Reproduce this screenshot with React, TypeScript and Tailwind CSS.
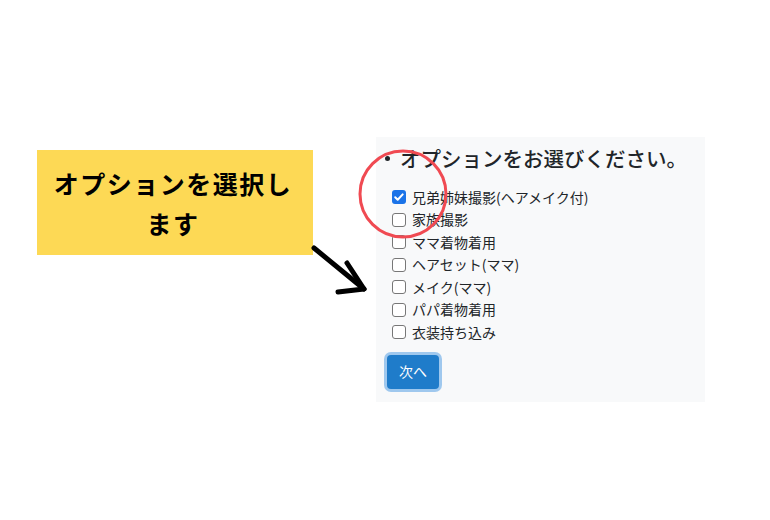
const options = [
  { label: "兄弟姉妹撮影(ヘアメイク付)", checked: true },
  { label: "家族撮影", checked: false },
  { label: "ママ着物着用", checked: false },
  { label: "ヘアセット(ママ)", checked: false },
  { label: "メイク(ママ)", checked: false },
  { label: "パパ着物着用", checked: false },
  { label: "衣装持ち込み", checked: false },
];

function Box({ checked }: { checked: boolean }) {
  if (checked) {
    return (
      <span className="flex h-[14px] w-[14px] shrink-0 items-center justify-center rounded-[3px] bg-[#1a73e8]">
        <svg viewBox="0 0 14 14" className="h-[14px] w-[14px]">
          <path d="M3.2 7.3l2.5 2.5 5-5.4" fill="none" stroke="#fff" strokeWidth="2" strokeLinecap="round" strokeLinejoin="round" />
        </svg>
      </span>
    );
  }
  return <span className="h-[14px] w-[14px] shrink-0 rounded-[3px] border-[1.5px] border-[#777] bg-white" />;
}

export default function App() {
  return (
    <div
      className="relative h-[520px] w-[770px] overflow-hidden bg-white"
      style={{ fontFamily: '"Noto Sans CJK JP", "Noto Sans", sans-serif' }}
    >
      <div className="flex items-start">
        <div className="ml-[37px] mt-[150px] flex h-[105px] w-[276px] items-center justify-center bg-[#fdd955]">
          <p className="pr-[4px] text-center text-[25px] font-bold leading-[40px] tracking-[1.5px] text-black">
            オプションを選択し
            <br />
            ます
          </p>
        </div>

        <div className="ml-[63px] mt-[137px] h-[265px] w-[329px] bg-[#f8f9fa] pl-[11px] pt-[6px] text-[#212529]">
          <h2 className="flex items-center text-[20.5px] font-medium leading-[30px]">
            <span className="ml-[-2px] mr-[10px] h-[5px] w-[5px] rounded-full bg-[#212529]" />
            オプションをお選びください。
          </h2>

          <ul className="mt-[13px] flex flex-col pl-[5px]">
            {options.map((o) => (
              <li key={o.label} className="flex h-[22.5px] items-center gap-[6px] text-[14px]">
                <Box checked={o.checked} />
                <span>{o.label}</span>
              </li>
            ))}
          </ul>

          <button className="mt-[11px] flex h-[34px] w-[52px] items-center justify-center rounded-[4px] bg-[#1f7cca] text-[14px] text-white ring-[3px] ring-[#9fc8ee]">
            次へ
          </button>
        </div>
      </div>

      <svg className="pointer-events-none absolute left-0 top-0" width="770" height="520">
        <ellipse cx="403" cy="194" rx="43" ry="43" fill="none" stroke="#f04a52" strokeWidth="3" />
        <g fill="none" stroke="#000" strokeWidth="5" strokeLinecap="round" strokeLinejoin="round">
          <path d="M314 248 L364 289" />
          <path d="M347 263 L364 289 L338 292" />
        </g>
      </svg>
    </div>
  );
}
